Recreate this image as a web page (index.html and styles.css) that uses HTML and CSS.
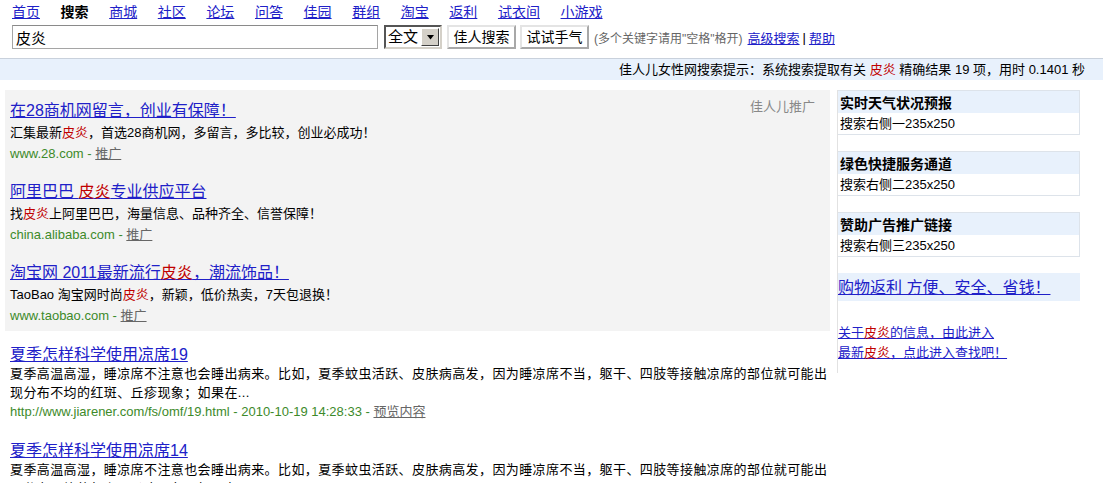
FILE: index.html
```html
<!DOCTYPE html>
<html lang="zh-CN">

<head>
    <meta charset="utf-8">
    <title>皮炎 - 佳人儿搜索</title>
    <link rel="stylesheet" href="styles.css">
</head>

<body>
    <div class="nav">
        <a href="#">首页</a>
        <b>搜索</b>
        <a href="#">商城</a>
        <a href="#">社区</a>
        <a href="#">论坛</a>
        <a href="#">问答</a>
        <a href="#">佳园</a>
        <a href="#">群组</a>
        <a href="#">淘宝</a>
        <a href="#">返利</a>
        <a href="#">试衣间</a>
        <a href="#">小游戏</a>
    </div>

    <form class="search-row" onsubmit="return false">
        <input class="kw" type="text" value="皮炎">
        <div class="select">
            <span class="select-text">全文</span>
            <span class="select-btn">
                <svg width="9" height="5" viewBox="0 0 9 5"><path d="M1 0h7L4.5 4.5z" fill="#000"/></svg>
            </span>
        </div>
        <button type="button">佳人搜索</button>
        <button type="button">试试手气</button>
        <span class="hint">(多个关键字请用"空格"格开)</span>
        <a href="#">高级搜索</a><span class="sep">|</span><a href="#">帮助</a>
    </form>

    <div class="tipbar">
        佳人儿女性网搜索提示：系统搜索提取有关 <span class="hl">皮炎</span> 精确结果 19 项，用时 0.1401 秒
    </div>

    <div class="page">
        <div class="main">
            <div class="ads">
                <span class="ads-tag">佳人儿推广</span>
                <div class="item">
                    <a class="title" href="#">在28商机网留言，创业有保障！</a>
                    <div class="desc">汇集最新<span class="hl">皮炎</span>，首选28商机网，多留言，多比较，创业必成功！</div>
                    <div class="url">www.28.com - <a class="gray" href="#">推广</a></div>
                </div>
                <div class="item">
                    <a class="title" href="#">阿里巴巴 <span class="hl">皮炎</span>专业供应平台</a>
                    <div class="desc">找<span class="hl">皮炎</span>上阿里巴巴，海量信息、品种齐全、信誉保障！</div>
                    <div class="url">china.alibaba.com - <a class="gray" href="#">推广</a></div>
                </div>
                <div class="item">
                    <a class="title" href="#">淘宝网 2011最新流行<span class="hl">皮炎</span>，潮流饰品！</a>
                    <div class="desc">TaoBao 淘宝网时尚<span class="hl">皮炎</span>，新颖，低价热卖，7天包退换！</div>
                    <div class="url">www.taobao.com - <a class="gray" href="#">推广</a></div>
                </div>
            </div>

            <div class="result">
                <a class="title" href="#">夏季怎样科学使用凉席19</a>
                <div class="desc long">夏季高温高湿，睡凉席不注意也会睡出病来。比如，夏季蚊虫活跃、皮肤病高发，因为睡凉席不当，躯干、四肢等接触凉席的部位就可能出<br>现分布不均的红斑、丘疹现象；如果在...</div>
                <div class="url">http://www.jiarener.com/fs/omf/19.html - 2010-10-19 14:28:33 - <a class="gray" href="#">预览内容</a></div>
            </div>

            <div class="result">
                <a class="title" href="#">夏季怎样科学使用凉席14</a>
                <div class="desc long">夏季高温高湿，睡凉席不注意也会睡出病来。比如，夏季蚊虫活跃、皮肤病高发，因为睡凉席不当，躯干、四肢等接触凉席的部位就可能出<br>现分布不均的红斑、丘疹现象；如果在...</div>
                <div class="url">http://www.jiarener.com/fs/omf/14.html - 2010-10-19 14:28:33 - <a class="gray" href="#">预览内容</a></div>
            </div>
        </div>

        <div class="side">
            <div class="side-box">
                <h3>实时天气状况预报</h3>
                <p>搜索右侧一235x250</p>
            </div>
            <div class="side-box">
                <h3>绿色快捷服务通道</h3>
                <p>搜索右侧二235x250</p>
            </div>
            <div class="side-box">
                <h3>赞助广告推广链接</h3>
                <p>搜索右侧三235x250</p>
            </div>
            <div class="fanli">
                <a href="#">购物返利 方便、安全、省钱！</a>
            </div>
            <div class="side-links">
                <a href="#">关于<span class="hl">皮炎</span>的信息，由此进入</a>
                <a href="#">最新<span class="hl">皮炎</span>，点此进入查找吧！</a>
            </div>
        </div>
    </div>
</body>

</html>
```

FILE: styles.css
```css
:root {
    --link: #2020c8;
    --red: #c00000;
    --green: #3d8a2a;
    --light-blue: #e8f1fc;
}

body {
    margin: 0;
    font-family: "Liberation Sans", "Noto Sans CJK SC", sans-serif;
    font-size: 13px;
    color: #000;
    background: #fff;
}

a {
    color: var(--link);
}

.hl {
    color: var(--red);
}

.nav {
    display: flex;
    gap: 20.6px;
    padding: 2px 12px 0;
    font-size: 14px;
    line-height: 20px;
}

.nav b {
    color: #000;
}

.search-row {
    display: flex;
    align-items: center;
    margin: 3px 0 0 12px;
    height: 24px;
}

.kw {
    box-sizing: border-box;
    width: 366px;
    height: 24px;
    padding: 0 3px;
    border: 1px solid #a5a5a5;
    border-top-color: #8a8a8a;
    font-family: inherit;
    font-size: 15px;
    outline: none;
}

.select {
    box-sizing: border-box;
    display: flex;
    align-items: center;
    margin-left: 6px;
    width: 58px;
    height: 24px;
    border: 2px solid;
    border-color: #555 #d4d0c8 #d4d0c8 #555;
    background: #fff;
}

.select-text {
    flex: 1;
    padding-left: 2px;
    font-size: 15px;
    line-height: 20px;
}

.select-btn {
    display: flex;
    align-items: center;
    justify-content: center;
    width: 16px;
    height: 16px;
    margin-right: 1px;
    background: #d4d0c8;
    border: 1px solid;
    border-color: #fff #404040 #404040 #fff;
}

button {
    box-sizing: border-box;
    height: 24px;
    width: 69px;
    margin-left: 4px;
    padding: 0;
    background: #fff;
    border: 2px solid;
    border-color: #e4e4e4 #a8a8a8 #a8a8a8 #e4e4e4;
    font-family: inherit;
    font-size: 14px;
    line-height: 18px;
}

.select + button {
    margin-left: 5px;
}

.hint {
    margin: 0 5px;
    color: #666;
    font-size: 12px;
}

.sep {
    margin: 0 3px;
}

.tipbar {
    margin-top: 9px;
    height: 21px;
    line-height: 22px;
    padding-right: 18px;
    text-align: right;
    background: var(--light-blue);
    border-top: 1px solid #c9d1dc;
}

.page {
    display: flex;
    align-items: flex-start;
    margin-top: 10px;
}

.main {
    width: 825px;
    margin-left: 5px;
}

.ads {
    padding: 9px 15px 5px 5px;
    background: #f3f3f3;
}

.ads-tag {
    float: right;
    margin-top: -2px;
    color: #888;
    line-height: 20px;
}

.item {
    margin-bottom: 16px;
}

.item:last-child {
    margin-bottom: 0;
}

.title {
    font-size: 16px;
    line-height: 23px;
}

.desc {
    line-height: 21px;
}

.url {
    color: var(--green);
    line-height: 21px;
}

.gray {
    color: #666;
}

.result {
    padding-left: 5px;
    margin-top: 14px;
}

.result + .result {
    margin-top: 20px;
}

.result .title {
    line-height: 19px;
}

.result .desc,
.result .url {
    line-height: 19px;
}

.long {
    letter-spacing: 0.4px;
}

.side {
    width: 242px;
    margin-left: 7px;
    padding-bottom: 10px;
    border-left: 1px solid #e2e2e2;
}

.side-box {
    margin-bottom: 16px;
    border: 1px solid #dde3ea;
    border-left: none;
}

.side-box h3 {
    box-sizing: border-box;
    margin: 0;
    padding: 2px 0 0 2px;
    height: 22px;
    line-height: 20px;
    font-size: 14px;
    background: var(--light-blue);
}

.side-box p {
    margin: 0;
    padding: 1px 0 0 2px;
    height: 20px;
    line-height: 20px;
}

.fanli {
    box-sizing: border-box;
    height: 28px;
    padding-top: 2px;
    line-height: 26px;
    font-size: 16px;
    background: var(--light-blue);
}

.side-links {
    margin-top: 22px;
}

.side-links a {
    display: block;
    line-height: 20px;
}
```
